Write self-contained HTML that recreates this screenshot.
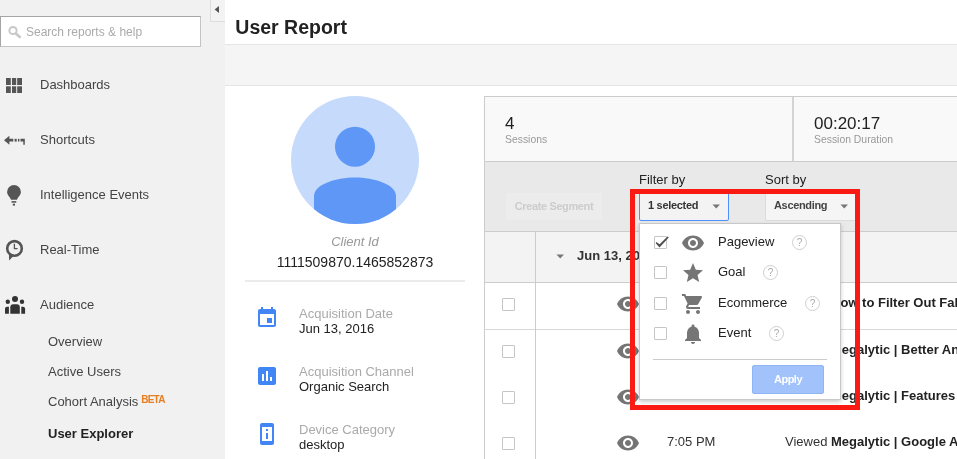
<!DOCTYPE html>
<html><head><meta charset="utf-8">
<style>
*{box-sizing:border-box;margin:0;padding:0}
html,body{width:957px;height:459px;overflow:hidden;background:#fff;will-change:transform;font-family:"Liberation Sans",Arial,sans-serif;color:#222}
div,span,svg{position:absolute}
.t{white-space:nowrap;line-height:1}
#side{left:0;top:0;width:225px;height:459px;background:#f1f1f1;z-index:1}
#collapse{left:210px;top:0;width:15px;height:22px;background:#f3f3f3;border-left:1px solid #ddd;border-bottom:1px solid #ddd}
#search{left:0;top:16px;width:201px;height:31px;background:#fff;border:1px solid #c4c4c4;border-top-color:#a5a5a5;border-left-color:#a5a5a5}
.nav{left:40px;font-size:13px;color:#444}
.sub{left:48px;font-size:13px;color:#444}
#main{left:224px;top:0;width:733px;height:459px;background:#fff}
#band{left:0;top:44px;width:733px;height:42px;background:#f5f5f5;border-top:1px solid #e5e5e5;border-bottom:1px solid #e5e5e5}
.lbl{left:75px;font-size:13px;color:#aaa}
.val{left:75px;font-size:13px;color:#222}
.cb{width:13px;height:13px;border:1px solid #c6c6c6;background:#fff;border-radius:1px}
.help{width:15px;height:15px;border:1px solid #d0d0d0;border-radius:50%;background:#fff;color:#aaa;font-size:10px;line-height:13.500px;text-align:center}
.opt{left:718px;font-size:13px;color:#222}
.rowtxt{left:785px;font-size:13px;color:#333}
.rowtxt b{color:#222}
</style></head><body>
<div id="side">
  <div id="collapse"><svg width="14" height="20" style="left:0;top:0"><path d="M3.600 9.500 L8 5.900 L8 13.100Z" fill="#555"/></svg></div>
  <div id="search">
    <svg width="24" height="29" style="left:0;top:0"><circle cx="12" cy="13.5" r="3.6" fill="none" stroke="#c8c8c8" stroke-width="2"/><path d="M14.800 16.400 L18.800 19.900" stroke="#c8c8c8" stroke-width="2.600" stroke-linecap="round"/></svg>
    <span class="t" style="left:25px;top:9px;font-size:12px;color:#aaa">Search reports &amp; help</span>
  </div>
  <svg width="28" height="20" style="left:0;top:76px"><g fill="#555"><rect x="6" y="2" width="4.8" height="7"/><rect x="12" y="2" width="4.2" height="7"/><rect x="17.2" y="2" width="4.8" height="7"/><rect x="6" y="10.3" width="4.8" height="6.7"/><rect x="12" y="10.3" width="4.2" height="6.7"/><rect x="17.2" y="10.3" width="4.8" height="6.7"/></g></svg>
  <div class="nav t" style="top:78px">Dashboards</div>
  <svg width="28" height="20" style="left:0;top:130px"><g fill="#555"><path d="M4 10.2 L9.4 5.8 L9.4 8.8 L13.3 8.8 L13.3 11.6 L9.4 11.6 L9.4 14.8Z"/><rect x="14.6" y="8.8" width="2.1" height="2.8"/><rect x="17.9" y="8.8" width="1.5" height="2.8"/><path d="M20.5 8.8 H24.8 V14.8 H23.3 V11.6 H20.5Z"/></g></svg>
  <div class="nav t" style="top:133px">Shortcuts</div>
  <svg width="28" height="26" style="left:0;top:182px"><g fill="#555"><path d="M14 3 A6.9 6.9 0 0 1 20.9 9.9 C20.9 13.2 17.6 15 17 17.8 L11 17.8 C10.4 15 7.1 13.2 7.1 9.9 A6.9 6.9 0 0 1 14 3Z"/><rect x="11.5" y="19.1" width="4.8" height="1.6"/><rect x="12.8" y="21.7" width="2.2" height="1.9"/></g></svg>
  <div class="nav t" style="top:188px">Intelligence Events</div>
  <svg width="28" height="26" style="left:0;top:236px"><circle cx="14.5" cy="12.4" r="7.3" fill="none" stroke="#555" stroke-width="2.6"/><path d="M9 17 L9 24.5 L14 19.5Z" fill="#555"/><path d="M14.4 7.8 V12.6 H17.6" fill="none" stroke="#555" stroke-width="1.3"/></svg>
  <div class="nav t" style="top:243px">Real-Time</div>
  <svg width="30" height="22" style="left:0;top:294px"><g fill="#333"><circle cx="15" cy="5" r="3"/><circle cx="7.8" cy="7.800" r="2.2"/><circle cx="22" cy="7.800" r="2.2"/><path d="M10.300 19.700 V13.200 A3 3 0 0 1 13.300 10.200 H16.800 A3 3 0 0 1 19.800 13.200 V19.700Z"/><path d="M5 19.7 V14.6 A2 2 0 0 1 7 12.8 H8.9 V19.7Z"/><path d="M25.1 19.7 V14.6 A2 2 0 0 0 23.1 12.8 H21.3 V19.7Z"/></g></svg>
  <div class="nav t" style="top:298px">Audience</div>
  <div class="sub t" style="top:335px">Overview</div>
  <div class="sub t" style="top:365px">Active Users</div>
  <div class="sub t" style="top:395px">Cohort Analysis<span class="t" style="position:relative;left:2.800px;top:-3px;font-size:10px;letter-spacing:-0.7px;font-weight:bold;color:#e67e22">BETA</span></div>
  <div class="sub t" style="top:427px;font-weight:bold;color:#222">User Explorer</div>
</div>
<div id="main">
  <div class="t" style="left:11.3px;top:18.25px;font-size:19.5px;font-weight:bold;color:#222">User Report</div>
  <div id="band"></div>

  <!-- avatar -->
  <svg width="128" height="128" viewBox="0 0 128 128" style="left:67px;top:96px"><defs><clipPath id="cc"><circle cx="64" cy="64" r="64"/></clipPath></defs><circle cx="64" cy="64" r="64" fill="#c6dafc"/><g clip-path="url(#cc)" fill="#5e97f6"><circle cx="64" cy="50.700" r="20"/><path d="M23 128 V100 C23 88.500 45 81.500 64 81.500 C83 81.500 105 88.500 105 100 V128Z"/></g></svg>
  <div class="t" style="left:31px;width:200px;text-align:center;top:235px;font-size:13px;font-style:italic;color:#999">Client Id</div>
  <div class="t" style="left:31px;width:200px;text-align:center;top:255px;font-size:14px;color:#222">1111509870.1465852873</div>
  <div style="left:21px;top:280px;width:220px;height:2px;background:#ebebeb"></div>

  <svg width="24" height="24" viewBox="0 0 24 24" style="left:31px;top:306px"><path fill="#4285f4" d="M17 12h-5v5h5v-5zM16 1v2H8V1H6v2H5c-1.11 0-1.99.9-1.99 2L3 19c0 1.1.89 2 2 2h14c1.100 0 2-.9 2-2V5c0-1.100-.9-2-2-2h-1V1h-2zm3 18H5V8h14v11z"/></svg>
  <div class="lbl t" style="top:307px">Acquisition Date</div>
  <div class="val t" style="top:322px">Jun 13, 2016</div>

  <svg width="24" height="24" viewBox="0 0 24 24" style="left:31px;top:364px"><path fill="#4285f4" d="M19 3H5c-1.100 0-2 .9-2 2v14c0 1.100.9 2 2 2h14c1.100 0 2-.9 2-2V5c0-1.100-.9-2-2-2zM9 17H7v-7h2v7zm4 0h-2V7h2v10zm4 0h-2v-4h2v4z"/></svg>
  <div class="lbl t" style="top:365px">Acquisition Channel</div>
  <div class="val t" style="top:380px">Organic Search</div>

  <svg width="24" height="24" viewBox="0 0 24 24" style="left:31px;top:422px"><path fill="#4285f4" d="M13 7h-2v2h2V7zm0 4h-2v6h2v-6zm4-9.990L7 1c-1.100 0-2 .9-2 2v18c0 1.100.9 2 2 2h10c1.100 0 2-.9 2-2V3c0-1.100-.9-1.990-2-1.990zM17 19H7V5h10v14z"/></svg>
  <div class="lbl t" style="top:423px">Device Category</div>
  <div class="val t" style="top:438px">desktop</div>
</div>

<!-- right panel (absolute in page coords) -->
<div id="panel" style="left:484px;top:96px;width:480px;height:370px;background:#fff;border:1px solid #ccc"></div>
<div style="left:485px;top:97px;width:472px;height:64px;background:#f9f9f9"></div>
<div style="left:485px;top:161px;width:472px;height:1px;background:#ccc"></div>
<div style="left:792px;top:97px;width:2px;height:64px;background:#d4d4d4"></div>
<div class="t" style="left:505px;top:115px;font-size:17px;color:#222">4</div>
<div class="t" style="left:505px;top:135px;font-size:10.4px;color:#999">Sessions</div>
<div class="t" style="left:814px;top:115px;font-size:17px;color:#222">00:20:17</div>
<div class="t" style="left:814px;top:135px;font-size:10.4px;color:#999">Session Duration</div>

<div style="left:485px;top:162px;width:472px;height:69px;background:#e9e9e9"></div>
<div style="left:485px;top:231px;width:472px;height:1px;background:#ccc"></div>
<div class="t" style="left:639px;top:173px;font-size:13px;color:#222">Filter by</div>
<div class="t" style="left:765px;top:173px;font-size:13px;color:#222">Sort by</div>
<div style="left:506px;top:193px;width:96px;height:27px;background:#ececec;border-radius:2px"><span class="t" style="left:0;width:96px;text-align:center;top:8px;font-size:11px;letter-spacing:-0.38px;font-weight:bold;color:#ccc">Create Segment</span></div>
<div style="left:639px;top:192px;width:90px;height:29px;background:#f3f3f3;border:1px solid #4d90fe;border-radius:2px"><span class="t" style="left:8px;top:7px;font-size:11px;letter-spacing:-0.3px;font-weight:bold;color:#333">1 selected</span><svg width="10" height="6" style="left:72.4px;top:11.300px"><path d="M0.5 0.5 H8 L4.2 4.5Z" fill="#777"/></svg></div>
<div style="left:765px;top:192px;width:92px;height:29px;background:#f5f5f5;border:1px solid #dcdcdc;border-radius:2px"><span class="t" style="left:8px;top:7px;font-size:11px;letter-spacing:-0.33px;font-weight:bold;color:#444">Ascending</span><svg width="10" height="6" style="left:73.800px;top:11.300px"><path d="M0.5 0.5 H8 L4.2 4.5Z" fill="#777"/></svg></div>

<!-- table -->
<div style="left:485px;top:232px;width:472px;height:50px;background:#f3f3f3"></div>
<div style="left:485px;top:282px;width:472px;height:1px;background:#ccc"></div>
<div style="left:485px;top:329px;width:472px;height:1px;background:#d8d8d8"></div>
<div style="left:535px;top:232px;width:1px;height:227px;background:#ccc"></div>
<svg width="10" height="6" style="left:556px;top:254px"><path d="M0.5 0.5 H8 L4.2 4.5Z" fill="#777"/></svg>
<div class="t" style="left:577px;top:249px;font-size:13px;font-weight:bold;color:#333">Jun 13, 2016</div>

<div class="cb" style="left:502px;top:298px"></div>
<div class="cb" style="left:502px;top:345px"></div>
<div class="cb" style="left:502px;top:391px"></div>
<div class="cb" style="left:502px;top:437px"></div>
<svg class="eye" width="24" height="24" viewBox="0 0 24 24" style="left:616px;top:292px"><path fill="#757575" d="M12 4.500C7 4.500 2.730 7.610 1 12c1.730 4.390 6 7.500 11 7.500s9.270-3.110 11-7.500c-1.730-4.390-6-7.500-11-7.500zM12 17c-2.760 0-5-2.240-5-5s2.240-5 5-5 5 2.240 5 5-2.240 5-5 5zm0-8c-1.660 0-3 1.340-3 3s1.340 3 3 3 3-1.340 3-3-1.340-3-3-3z"/></svg>
<svg class="eye" width="24" height="24" viewBox="0 0 24 24" style="left:616px;top:339px"><path fill="#757575" d="M12 4.500C7 4.500 2.730 7.610 1 12c1.730 4.390 6 7.500 11 7.500s9.270-3.110 11-7.500c-1.730-4.390-6-7.500-11-7.500zM12 17c-2.760 0-5-2.240-5-5s2.240-5 5-5 5 2.240 5 5-2.240 5-5 5zm0-8c-1.660 0-3 1.340-3 3s1.340 3 3 3 3-1.340 3-3-1.340-3-3-3z"/></svg>
<svg class="eye" width="24" height="24" viewBox="0 0 24 24" style="left:616px;top:385px"><path fill="#757575" d="M12 4.500C7 4.500 2.730 7.610 1 12c1.730 4.390 6 7.500 11 7.500s9.270-3.110 11-7.500c-1.730-4.390-6-7.500-11-7.500zM12 17c-2.760 0-5-2.240-5-5s2.240-5 5-5 5 2.240 5 5-2.240 5-5 5zm0-8c-1.660 0-3 1.340-3 3s1.340 3 3 3 3-1.340 3-3-1.340-3-3-3z"/></svg>
<svg class="eye" width="24" height="24" viewBox="0 0 24 24" style="left:616px;top:431px"><path fill="#757575" d="M12 4.500C7 4.500 2.730 7.610 1 12c1.730 4.390 6 7.500 11 7.500s9.270-3.110 11-7.500c-1.730-4.390-6-7.500-11-7.500zM12 17c-2.760 0-5-2.240-5-5s2.240-5 5-5 5 2.240 5 5-2.240 5-5 5zm0-8c-1.660 0-3 1.340-3 3s1.340 3 3 3 3-1.340 3-3-1.340-3-3-3z"/></svg>
<div class="t" style="left:667px;top:296px;font-size:13px;color:#333">7:25 PM</div>
<div class="t" style="left:667px;top:343px;font-size:13px;color:#333">7:15 PM</div>
<div class="t" style="left:667px;top:389px;font-size:13px;color:#333">7:10 PM</div>
<div class="t" style="left:667px;top:435px;font-size:13px;color:#333">7:05 PM</div>
<div class="rowtxt t" style="top:296px">Viewed <b>How to Filter Out Fake Referrals</b></div>
<div class="rowtxt t" style="top:343px">Viewed <b>Megalytic | Better Analytics Reports</b></div>
<div class="rowtxt t" style="top:389px">Viewed <b>Megalytic | Features</b></div>
<div class="rowtxt t" style="top:435px">Viewed <b>Megalytic | Google Analytics</b></div>

<!-- dropdown -->
<div id="dd" style="left:639px;top:223px;width:202px;height:177px;background:#fff;border:1px solid #c8c8c8;box-shadow:0 2px 4px rgba(0,0,0,0.2)"></div>
<div class="cb" style="left:654px;top:236px"></div>
<svg width="20" height="20" style="left:650px;top:232px"><path d="M6.300 10 L9.600 12.200 L17.500 4.600 L18.800 5.500 L9.500 15.500 L5.700 11.300Z" fill="#505050"/></svg>
<div class="cb" style="left:654px;top:266px"></div>
<div class="cb" style="left:654px;top:297px"></div>
<div class="cb" style="left:654px;top:327px"></div>
<svg width="24" height="24" viewBox="0 0 24 24" style="left:681px;top:230.500px"><path fill="#757575" d="M12 4.500C7 4.500 2.730 7.610 1 12c1.730 4.390 6 7.500 11 7.500s9.270-3.110 11-7.500c-1.730-4.390-6-7.500-11-7.500zM12 17c-2.760 0-5-2.240-5-5s2.240-5 5-5 5 2.240 5 5-2.240 5-5 5zm0-8c-1.660 0-3 1.340-3 3s1.340 3 3 3 3-1.340 3-3-1.340-3-3-3z"/></svg>
<svg width="24" height="24" viewBox="0 0 24 24" style="left:681px;top:260.600px"><path fill="#757575" d="M12 17.270L18.180 21l-1.640-7.030L22 9.240l-7.190-.61L12 2 9.190 8.630 2 9.240l5.460 4.730L5.820 21z"/></svg>
<svg width="24" height="24" viewBox="0 0 24 24" style="left:681px;top:292px"><path fill="#757575" d="M7 18c-1.100 0-1.990.9-1.990 2S5.900 22 7 22s2-.9 2-2-.9-2-2-2zM1 2v2h2l3.600 7.590-1.350 2.450c-.16.280-.25.610-.25.960 0 1.100.9 2 2 2h12v-2H7.420c-.14 0-.25-.11-.25-.25l.03-.12.900-1.630h7.450c.75 0 1.410-.41 1.750-1.030l3.580-6.490c.08-.14.120-.31.120-.48 0-.55-.45-1-1-1H5.210l-.94-2H1zm16 16c-1.100 0-1.990.9-1.990 2s.89 2 1.990 2 2-.9 2-2-.9-2-2-2z"/></svg>
<svg width="24" height="24" viewBox="0 0 24 24" style="left:681px;top:322px"><path fill="#757575" d="M12 22c1.100 0 2-.9 2-2h-4c0 1.100.89 2 2 2zm6-6v-5c0-3.070-1.640-5.640-4.500-6.320V4c0-.83-.67-1.500-1.500-1.500s-1.500.67-1.500 1.500v.68C7.630 5.360 6 7.920 6 11v5l-2 2v1h16v-1l-2-2z"/></svg>
<div class="opt t" style="top:235px">Pageview</div>
<div class="opt t" style="top:265px">Goal</div>
<div class="opt t" style="top:296px">Ecommerce</div>
<div class="opt t" style="top:326px">Event</div>
<div class="help" style="left:792px;top:234.500px">?</div>
<div class="help" style="left:763px;top:265px">?</div>
<div class="help" style="left:805px;top:295.500px">?</div>
<div class="help" style="left:769px;top:326px">?</div>
<div style="left:653px;top:359px;width:174px;height:1px;background:#ccc"></div>
<div style="left:752px;top:365px;width:72px;height:29px;background:#a1c2fa;border:1px solid #8fb5f5;border-radius:2px"><span class="t" style="left:0;width:70px;text-align:center;top:8px;font-size:11px;letter-spacing:-0.5px;font-weight:bold;color:#fff">Apply</span></div>

<!-- red highlight -->
<div style="left:630px;top:189px;width:230px;height:221px;border:5.500px solid #fa1a14"></div>
</body></html>
